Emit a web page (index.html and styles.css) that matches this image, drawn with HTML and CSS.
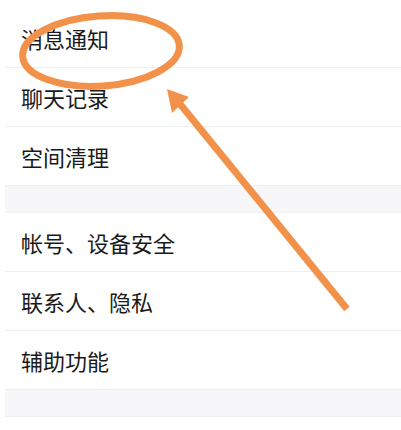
FILE: index.html
```html
<!DOCTYPE html>
<html lang="zh-CN">
<head>
<meta charset="UTF-8">
<meta name="viewport" content="width=device-width, initial-scale=1.0">
<title>设置</title>
<link rel="stylesheet" href="styles.css">
</head>
<body>
<div class="settings">
  <div class="group">
    <div class="item">消息通知</div>
    <div class="item">聊天记录</div>
    <div class="item">空间清理</div>
  </div>
  <div class="spacer"></div>
  <div class="group">
    <div class="item">帐号、设备安全</div>
    <div class="item">联系人、隐私</div>
    <div class="item">辅助功能</div>
  </div>
  <div class="spacer"></div>
</div>

<!-- hand-drawn annotation over the list -->
<svg class="mark" width="401" height="430" viewBox="0 0 401 430">
  <ellipse cx="101" cy="51" rx="78.5" ry="35" transform="rotate(-4 101 51)" />
  <line x1="180" y1="104" x2="347" y2="309" />
  <polygon points="167,89 189,97 172,113" />
</svg>
</body>
</html>
```

FILE: styles.css
```css
* {
  margin: 0;
  padding: 0;
  box-sizing: border-box;
}

body {
  width: 401px;
  height: 430px;
  background: #fff;
  font-family: "Noto Sans CJK SC", "Noto Sans", sans-serif;
  overflow: hidden;
  position: relative;
}

/* Settings list */
.settings {
  margin-left: 5px;
  padding-top: 9px;
}

.item {
  height: 59px;
  display: flex;
  align-items: center;
  padding-left: 16px;
  border-bottom: 1px solid #efeff1;
  font-size: 22px;
  color: #1a1a1a;
}

.spacer {
  height: 27px;
  background: #f7f7f9;
  border-bottom: 1px solid #efeff1;
}

/* Annotation */
.mark {
  position: absolute;
  top: 0;
  left: 0;
}

.mark ellipse {
  fill: none;
  stroke: #f2924a;
  stroke-width: 7;
}

.mark line {
  stroke: #f2924a;
  stroke-width: 7;
}

.mark polygon {
  fill: #f2924a;
}
```
